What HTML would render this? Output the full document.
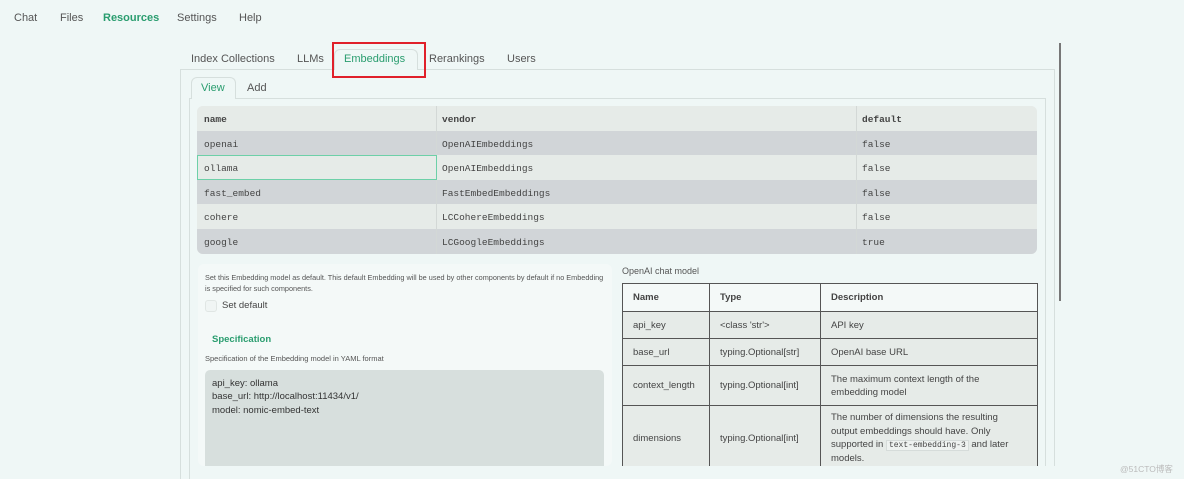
<!DOCTYPE html>
<html><head><meta charset="utf-8"><style>
*{box-sizing:border-box;margin:0;padding:0}
body{width:1184px;height:479px;overflow:hidden;background:#eff7f6;font-family:"Liberation Sans",sans-serif;color:#444;position:relative}
.a{position:absolute}
.nav{top:12px;font-size:11px;color:#555}
.tab{top:53px;font-size:11px;color:#555}
.mono{font-family:"Liberation Mono",monospace;font-size:9.5px;color:#444}
table.t2{border-collapse:collapse;font-size:9.5px;color:#444;table-layout:fixed}
table.t2 td{border:1px solid #555;padding:0 10px;vertical-align:middle}
</style></head><body>
<div class="a nav" style="left:14px">Chat</div>
<div class="a nav" style="left:60px">Files</div>
<div class="a nav" style="left:103px;color:#2a9d6f;font-weight:bold">Resources</div>
<div class="a nav" style="left:177px">Settings</div>
<div class="a nav" style="left:239px">Help</div>

<div class="a" style="left:180px;top:69px;width:875px;height:410px;border:1px solid #d6dfdd;border-bottom:none"></div>
<div class="a tab" style="left:191px">Index Collections</div>
<div class="a tab" style="left:297px">LLMs</div>
<div class="a" style="left:334px;top:49px;width:84px;height:21px;background:#eff7f6;border:1px solid #d6dfdd;border-bottom:none;border-radius:6px 6px 0 0"></div>
<div class="a tab" style="left:344px;color:#2a9d6f">Embeddings</div>
<div class="a" style="left:332px;top:42px;width:94px;height:36px;border:2px solid #e0202a"></div>
<div class="a tab" style="left:429px">Rerankings</div>
<div class="a tab" style="left:507px">Users</div>

<div class="a" style="left:189px;top:98px;width:857px;height:381px;border:1px solid #d6dfdd;border-bottom:none"></div>
<div class="a" style="left:191px;top:77px;width:45px;height:22px;background:#eff7f6;border:1px solid #d6dfdd;border-bottom:none;border-radius:6px 6px 0 0"></div>
<div class="a" style="left:201px;top:82px;font-size:11px;color:#2a9d6f">View</div>
<div class="a" style="left:247px;top:82px;font-size:11px;color:#555">Add</div>

<div class="a" style="left:197px;top:106px;width:840px;height:148px;border-radius:6px;overflow:hidden;background:#e6ebe8">
 <div class="a" style="left:0;top:0;width:840px;height:25px;background:#e6ebe8"></div>
 <div class="a" style="left:0;top:25px;width:840px;height:24px;background:#d1d5d8"></div>
 <div class="a" style="left:0;top:49px;width:840px;height:25px;background:#e6ebe8"></div>
 <div class="a" style="left:0;top:74px;width:840px;height:24px;background:#d1d5d8"></div>
 <div class="a" style="left:0;top:98px;width:840px;height:25px;background:#e6ebe8"></div>
 <div class="a" style="left:0;top:123px;width:840px;height:25px;background:#d1d5d8"></div>
 <div class="a" style="left:239px;top:0;width:1px;height:148px;background:#d3d8d6"></div>
 <div class="a" style="left:659px;top:0;width:1px;height:148px;background:#d3d8d6"></div>
 <div class="a" style="left:0;top:49px;width:240px;height:25px;border:1px solid #6dd0a8"></div>
</div>
<div class="a mono" style="left:204px;top:114px;font-weight:bold">name</div>
<div class="a mono" style="left:442px;top:114px;font-weight:bold">vendor</div>
<div class="a mono" style="left:862px;top:114px;font-weight:bold">default</div>
<div class="a mono" style="left:204px;top:139px">openai</div><div class="a mono" style="left:442px;top:139px">OpenAIEmbeddings</div><div class="a mono" style="left:862px;top:139px">false</div>
<div class="a mono" style="left:204px;top:163px">ollama</div><div class="a mono" style="left:442px;top:163px">OpenAIEmbeddings</div><div class="a mono" style="left:862px;top:163px">false</div>
<div class="a mono" style="left:204px;top:188px">fast_embed</div><div class="a mono" style="left:442px;top:188px">FastEmbedEmbeddings</div><div class="a mono" style="left:862px;top:188px">false</div>
<div class="a mono" style="left:204px;top:212px">cohere</div><div class="a mono" style="left:442px;top:212px">LCCohereEmbeddings</div><div class="a mono" style="left:862px;top:212px">false</div>
<div class="a mono" style="left:204px;top:237px">google</div><div class="a mono" style="left:442px;top:237px">LCGoogleEmbeddings</div><div class="a mono" style="left:862px;top:237px">true</div>

<div class="a" style="left:198px;top:264px;width:414px;height:202px;background:#f4f9f8;border-radius:6px"></div>
<div class="a" style="left:205px;top:272px;width:405px;font-size:7.3px;line-height:11px;color:#555">Set this Embedding model as default. This default Embedding will be used by other components by default if no Embedding is specified for such components.</div>
<div class="a" style="left:205px;top:300px;width:12px;height:12px;border:1px solid #e0e6e4;border-radius:3px;background:#f0f5f4"></div>
<div class="a" style="left:222px;top:300px;font-size:9.5px;color:#444">Set default</div>
<div class="a" style="left:212px;top:334px;font-size:9.5px;color:#2a9d6f;font-weight:bold">Specification</div>
<div class="a" style="left:205px;top:354px;font-size:7.5px;color:#555">Specification of the Embedding model in YAML format</div>
<div class="a" style="left:205px;top:370px;width:399px;height:96px;background:#d7dfdd;border-radius:5px 5px 0 0"></div>
<div class="a" style="left:212px;top:377px;font-size:9.5px;line-height:13.3px;color:#333">api_key: ollama<br>base_url: http://localhost:11434/v1/<br>model: nomic-embed-text</div>

<div class="a" style="left:622px;top:266px;font-size:9px;color:#555">OpenAI chat model</div>
<table class="t2 a" style="left:622px;top:283px;width:416px">
<tr style="height:28px;background:#f4f9f8;font-weight:bold"><td style="width:87px">Name</td><td style="width:111px">Type</td><td>Description</td></tr>
<tr style="height:27px;background:#e6ebe8"><td>api_key</td><td>&lt;class 'str'&gt;</td><td>API key</td></tr>
<tr style="height:27px;background:#e6ebe8"><td>base_url</td><td>typing.Optional[str]</td><td>OpenAI base URL</td></tr>
<tr style="height:40px;background:#e6ebe8"><td>context_length</td><td>typing.Optional[int]</td><td style="line-height:13px;padding-right:40px">The maximum context length of the embedding model</td></tr>
<tr style="height:66px;background:#e6ebe8"><td>dimensions</td><td>typing.Optional[int]</td><td style="line-height:13.3px;padding-right:24px">The number of dimensions the resulting output embeddings should have. Only supported in <span style="font-family:'Liberation Mono',monospace;font-size:8px;background:#eef2f0;border:1px solid #d6dcda;padding:0 2px">text-embedding-3</span> and later models.</td></tr>
</table>
<div class="a" style="left:0;top:466px;width:1184px;height:13px;background:#eff7f6"></div>
<div class="a" style="left:180px;top:466px;width:1px;height:13px;background:#d6dfdd"></div>
<div class="a" style="left:189px;top:466px;width:1px;height:13px;background:#d6dfdd"></div>

<div class="a" style="left:1059px;top:43px;width:2px;height:258px;background:#777"></div>
<div class="a" style="left:1120px;top:463px;font-size:8.5px;color:#bbb;font-family:'Liberation Sans','Noto Sans CJK SC',sans-serif">@51CTO博客</div>
</body></html>
